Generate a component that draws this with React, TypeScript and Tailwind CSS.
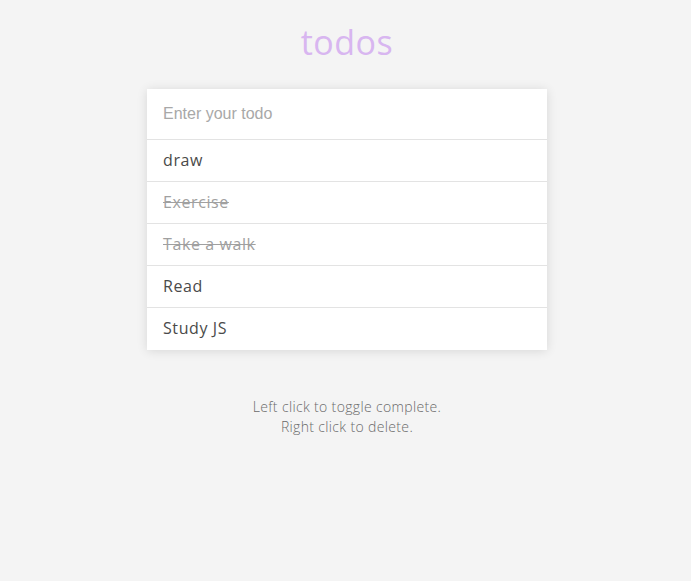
import React from "react";

const todos = [
  { text: "draw", done: false },
  { text: "Exercise", done: true },
  { text: "Take a walk", done: true },
  { text: "Read", done: false },
  { text: "Study JS", done: false },
];

export default function App() {
  return (
    <div className="min-h-[581px] w-full bg-[#f4f4f4] pl-[3px] font-['Open_Sans',sans-serif]">
      <div className="flex flex-col items-center pt-[18px]">
        <h1 className="text-[34px] leading-[48px] font-medium text-[#d8b6f0] tracking-[0.5px]">
          todos
        </h1>
        <div className="mt-[23px] w-[400px] bg-white shadow-[0_1px_10px_rgba(0,0,0,0.12)]">
          <div className="h-[51px] border-b border-[#e3e3e3] flex items-center px-4">
            <input
              className="w-full outline-none text-[16px] font-['Liberation_Sans',sans-serif] placeholder:text-[#a8a8a8] text-[#444]"
              placeholder="Enter your todo"
            />
          </div>
          {todos.map((t, i) => (
            <div
              key={i}
              className={
                "h-[42px] flex items-center px-4 pb-[2px] text-[16px] tracking-[0.6px] " +
                (i < todos.length - 1 ? "border-b border-[#e3e3e3] " : "") +
                (t.done ? "line-through text-[#a0a0a0]" : "text-[#4a4a4a]")
              }
            >
              {t.text}
            </div>
          ))}
        </div>
        <div className="mt-[47px] text-center text-[14px] leading-[20px] text-[#6a6a6a] font-light tracking-[0.35px]">
          <p>Left click to toggle complete.</p>
          <p>Right click to delete.</p>
        </div>
      </div>
    </div>
  );
}
